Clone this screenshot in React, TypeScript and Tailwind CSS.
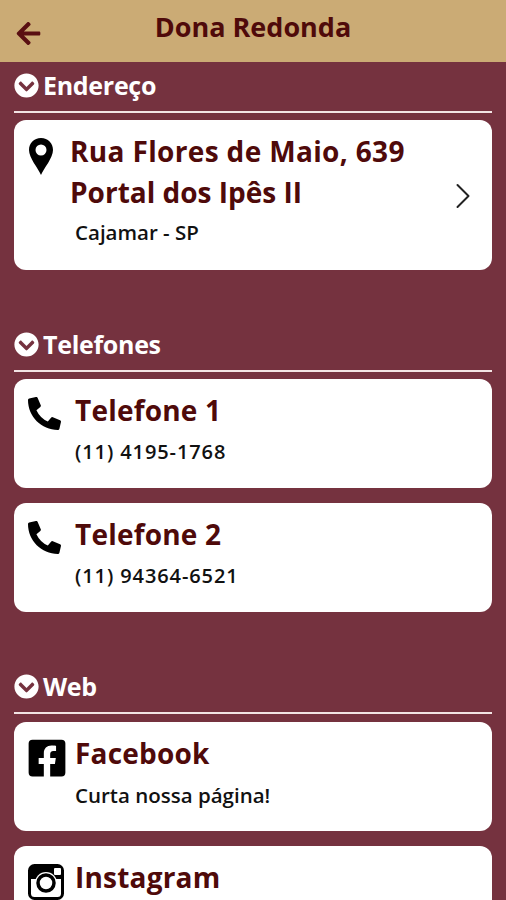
import type { ReactNode } from 'react'
import { FaArrowLeft, FaChevronCircleDown, FaFacebookSquare, FaPhoneAlt } from 'react-icons/fa'
import { FiChevronRight } from 'react-icons/fi'

function InstagramIcon() {
  return (
    <svg viewBox="0 0 36 36" className="h-[36px] w-[36px] text-black">
      <rect x="1.5" y="1.5" width="33" height="33" rx="5" fill="none" stroke="currentColor" strokeWidth="3" />
      <path d="M6 1.5h24a4.5 4.5 0 0 1 4.5 4.5v9H1.5V6A4.5 4.5 0 0 1 6 1.5z" fill="currentColor" />
      <circle cx="18" cy="19" r="11" fill="white" />
      <circle cx="18" cy="19" r="8" fill="none" stroke="currentColor" strokeWidth="3.5" />
      <rect x="26" y="4" width="7" height="7" rx="1" fill="white" />
    </svg>
  )
}

function MarkerIcon() {
  return (
    <svg viewBox="0 0 24 37" className="h-[37px] w-[24px] text-black">
      <path
        fillRule="evenodd"
        fill="currentColor"
        d="M12 0C5 0 0 5 0 12c0 8 9 18 12 25 3-7 12-17 12-25C24 5 19 0 12 0zm0 6.5a5.5 5.5 0 1 1 0 11 5.5 5.5 0 0 1 0-11z"
      />
    </svg>
  )
}

function SectionTitle({ label }: { label: string }) {
  return (
    <div className="border-b-2 border-[#f3e4e4] h-[41px] flex items-center gap-[4px] pb-[12px]">
      <FaChevronCircleDown className="text-white text-[25px]" />
      <span className="text-white text-[25px] font-bold leading-none tracking-[-0.3px]">{label}</span>
    </div>
  )
}

function ContactCard({ icon, title, sub, wide }: { icon: ReactNode; title: string; sub?: string; wide?: boolean }) {
  return (
    <div className="bg-white rounded-[12px] h-[109px] flex items-start">
      <div className="w-[61px] pl-[14px] pt-[18px] shrink-0">{icon}</div>
      <div className="pt-[9px]">
        <p className="text-[#4f0a0a] text-[28px] font-bold leading-[44px] tracking-[0.2px]">{title}</p>
        {sub && (
          <p className={`text-[#111] font-semibold leading-[26px] mt-[7px] ${wide ? 'text-[20px] tracking-[0.9px]' : 'text-[20.5px]'}`}>
            {sub}
          </p>
        )}
      </div>
    </div>
  )
}

export default function App() {
  return (
    <div className="h-[900px] overflow-hidden bg-[#75323f] font-['Open_Sans',sans-serif]">
      {/* Header */}
      <header className="h-[62px] bg-[#cbab75] relative flex items-center justify-center pb-[9px]">
        <FaArrowLeft className="absolute left-[15px] top-[20px] text-[#5a0f12] text-[27px]" />
        <h1 className="text-[#4f0a0a] text-[27px] font-bold leading-none">Dona Redonda</h1>
      </header>

      <main className="px-[14px] pt-[10px]">
        {/* Endereço */}
        <SectionTitle label="Endereço" />
        <div className="bg-white rounded-[12px] h-[150px] mt-[7px] relative flex items-start">
          <div className="w-[56px] pl-[15px] pt-[18px] shrink-0">
            <MarkerIcon />
          </div>
          <div className="pt-[11px]">
            <p className="text-[#4f0a0a] text-[28px] font-bold leading-[41px] tracking-[0.35px]">Rua Flores de Maio, 639</p>
            <p className="text-[#4f0a0a] text-[28px] font-bold leading-[40px]">Portal dos Ipês II</p>
            <p className="text-[#111] text-[20.5px] font-semibold leading-[26px] mt-[7px] ml-[5px]">Cajamar - SP</p>
          </div>
          <FiChevronRight strokeWidth={1.1} className="absolute right-[7px] top-[54px] text-[#222] text-[44px]" />
        </div>

        {/* Telefones */}
        <div className="mt-[61px]">
          <SectionTitle label="Telefones" />
        </div>
        <div className="mt-[7px] flex flex-col gap-[15px]">
          <ContactCard icon={<FaPhoneAlt className="text-black text-[33px]" />} title="Telefone 1" sub="(11) 4195-1768" wide />
          <ContactCard icon={<FaPhoneAlt className="text-black text-[33px]" />} title="Telefone 2" sub="(11) 94364-6521" wide />
        </div>

        {/* Web */}
        <div className="mt-[61px]">
          <SectionTitle label="Web" />
        </div>
        <div className="mt-[8px] flex flex-col gap-[15px]">
          <ContactCard icon={<FaFacebookSquare className="text-black text-[42px] -mt-[3px] -ml-[2px]" />} title="Facebook" sub="Curta nossa página!" />
          <ContactCard icon={<InstagramIcon />} title="Instagram" />
        </div>
      </main>
    </div>
  )
}
